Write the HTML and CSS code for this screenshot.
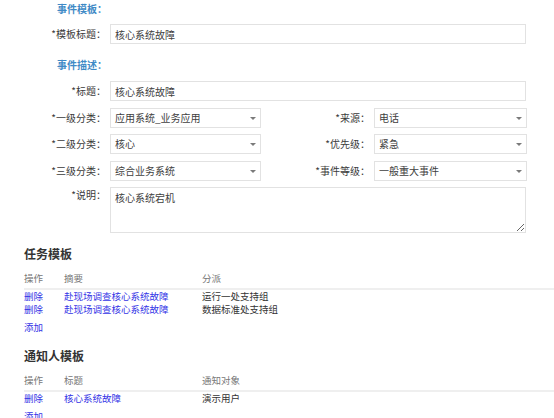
FILE: index.html
```html
<!DOCTYPE html>
<html lang="zh-CN">
<head>
<meta charset="utf-8">
<title>事件模板</title>
<link rel="stylesheet" href="styles.css">
</head>
<body>
<div class="page">
  <form class="form">
    <div class="sec-title first">事件模板：</div>

    <label class="lbl">*模板标题：</label>
    <input class="box span3" type="text" value="核心系统故障" readonly>

    <div class="sec-title second">事件描述：</div>

    <label class="lbl">*标题：</label>
    <input class="box span3" type="text" value="核心系统故障" readonly>

    <label class="lbl">*一级分类：</label>
    <div class="box select">应用系统_业务应用</div>
    <label class="lbl">*来源：</label>
    <div class="box select">电话</div>

    <label class="lbl">*二级分类：</label>
    <div class="box select">核心</div>
    <label class="lbl">*优先级：</label>
    <div class="box select">紧急</div>

    <label class="lbl">*三级分类：</label>
    <div class="box select">综合业务系统</div>
    <label class="lbl">*事件等级：</label>
    <div class="box select">一般重大事件</div>

    <label class="lbl top">*说明：</label>
    <textarea class="box area span3" readonly>核心系统宕机</textarea>
  </form>

  <section class="block task">
    <h3 class="block-title">任务模板</h3>
    <table class="grid">
      <thead>
        <tr><th class="c1">操作</th><th class="c2">摘要</th><th>分派</th></tr>
      </thead>
      <tbody>
        <tr><td><a href="#">删除</a></td><td><a href="#">赴现场调查核心系统故障</a></td><td>运行一处支持组</td></tr>
        <tr><td><a href="#">删除</a></td><td><a href="#">赴现场调查核心系统故障</a></td><td>数据标准处支持组</td></tr>
      </tbody>
    </table>
    <a class="add" href="#">添加</a>
  </section>

  <section class="block notify">
    <h3 class="block-title">通知人模板</h3>
    <table class="grid">
      <thead>
        <tr><th class="c1">操作</th><th class="c2">标题</th><th>通知对象</th></tr>
      </thead>
      <tbody>
        <tr><td><a href="#">删除</a></td><td><a href="#">核心系统故障</a></td><td>演示用户</td></tr>
      </tbody>
    </table>
    <a class="add" href="#">添加</a>
  </section>
</div>
</body>
</html>
```

FILE: styles.css
```css
html, body {
  margin: 0;
  padding: 0;
  background: #ffffff;
}

body {
  font-family: "Noto Sans CJK SC", "Noto Sans", "Liberation Sans", sans-serif;
  font-size: 10px;
  color: #333333;
  overflow: hidden;
}

.page {
  width: 554px;
}

.form {
  display: grid;
  grid-template-columns: 110px 151px 113px 153px;
  row-gap: 6.5px;
  align-items: center;
}

.sec-title {
  grid-column: 1 / -1;
  padding-left: 57px;
  font-weight: bold;
  color: #3f8ac6;
  font-size: 10px;
  line-height: 17px;
  height: 17.5px;
}

.sec-title.second {
  margin-top: 5.5px;
  height: 18.5px;
}

.lbl {
  text-align: right;
  padding-right: 4px;
  color: #3a3a3a;
  font-size: 10px;
  line-height: 20px;
  white-space: nowrap;
}

.lbl.top {
  align-self: start;
  line-height: 16px;
}

.box {
  box-sizing: border-box;
  height: 20px;
  margin: 0;
  border: 1px solid #e2e2e2;
  background: #ffffff;
  font-family: inherit;
  font-size: 10px;
  color: #404040;
  padding: 0 4px;
  line-height: 18px;
  outline: none;
  border-radius: 0;
}

.span3 {
  grid-column: 2 / span 3;
  width: 416px;
}

.select {
  position: relative;
  white-space: nowrap;
}

.select::after {
  content: "";
  position: absolute;
  right: 4px;
  top: 8px;
  border-left: 3px solid transparent;
  border-right: 3px solid transparent;
  border-top: 3px solid #7a7a7a;
}

.area {
  height: 46px;
  padding: 2px 4px;
  line-height: 16px;
  resize: both;
}

.block {
  padding-left: 24px;
}

.task {
  margin-top: 13px;
}

.notify {
  margin-top: 14.5px;
}

.block-title {
  margin: 0;
  font-size: 12px;
  font-weight: bold;
  line-height: 16px;
  color: #333333;
}

.grid {
  margin-top: 9.5px;
  width: 530px;
  border-collapse: collapse;
  font-size: 9.5px;
}

.grid th {
  text-align: left;
  font-weight: normal;
  color: #777777;
  line-height: 13px;
  padding: 0 0 3.5px 0;
  border-bottom: 2px solid #efefef;
}

.grid td {
  padding: 0;
  line-height: 13px;
  color: #333333;
}

.grid .c1 {
  width: 40px;
}

.grid .c2 {
  width: 138px;
}

a {
  color: #3434e6;
  text-decoration: none;
}

.add {
  display: block;
  margin-top: 4.5px;
  font-size: 9.5px;
  line-height: 13px;
}
```
